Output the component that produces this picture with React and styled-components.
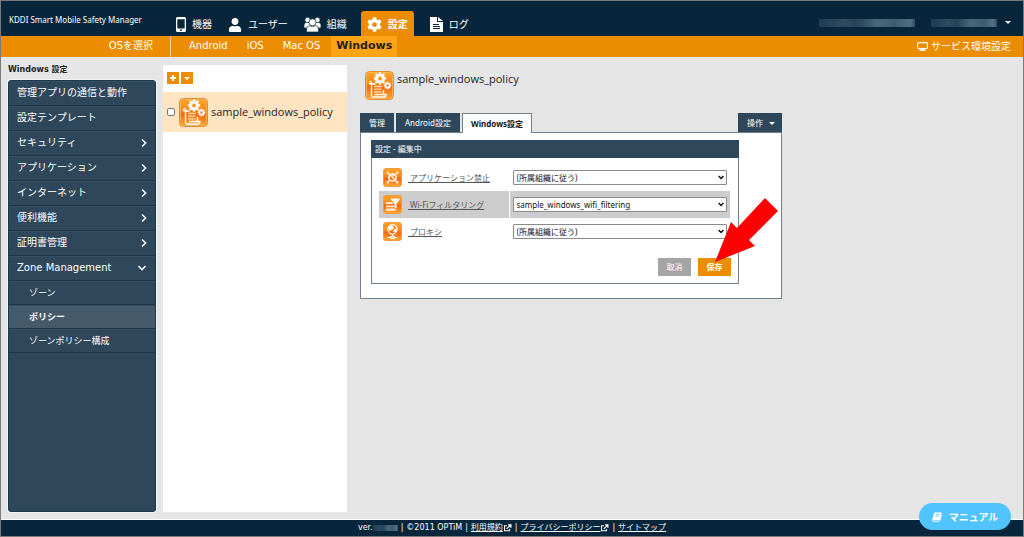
import React from "react";
import styled, { createGlobalStyle, css } from "styled-components";
import { FaUser, FaCog } from "react-icons/fa";

const wide = '"DejaVu Sans", "Noto Sans CJK JP", sans-serif';
const narrow = '"Noto Sans", "Noto Sans CJK JP", sans-serif';
const title = '"Open Sans", "Noto Sans CJK JP", sans-serif';

const GlobalStyle = createGlobalStyle`
  *, *::before, *::after { box-sizing: border-box; }
  body { margin: 0; background: #e5e5e5; color: #222; font: 10px/16px ${wide}; }
  button, select, input { font-family: inherit; margin: 0; }
  a { color: inherit; }
  svg { display: block; flex: none; }
`;

const Shell = styled.div`
  min-height: 100vh;
  display: flex;
  flex-direction: column;
  border: 1px solid #7b7b7b;
`;

const Header = styled.header`
  display: flex;
  height: 35px;
  padding-left: 8px;
  background: #07263b;
  color: #fff;
`;
const Brand = styled.div`
  width: 161px;
  padding-top: 11px;
  font: 8px/16px ${narrow};
  white-space: nowrap;
`;
const Nav = styled.nav`
  display: flex;
  align-items: flex-end;
`;
const NavLink = styled.a`
  display: flex;
  align-items: center;
  gap: 6px;
  height: 25px;
  padding: 2px 6px 0 6px;
  margin-right: 4px;
  border-radius: 3px 3px 0 0;
  text-decoration: none;
  white-space: nowrap;
  ${(p) => p.$active && css`
    margin: 0 10px 0 4px;
    background: #ec8c00;
    font-weight: bold;
  `}
`;
const Account = styled.button`
  display: flex;
  align-items: center;
  gap: 8px;
  margin-left: auto;
  padding: 8px 12px 0 0;
  border: 0;
  background: none;
  color: #fff;
`;
const AccountNames = styled.span`
  display: flex;
  gap: 16px;
`;
const Masked = styled.span`
  display: inline-block;
  width: ${(p) => p.$w}px;
  height: ${(p) => p.$h || 8}px;
  background: linear-gradient(90deg, #1f3d52, #2e4c60 25%, #264559 40%, #4a6679 60%, #3f5c70 80%, #557082 95%, #2d4a5e);
`;
const Caret = styled.span`
  border: 3px solid transparent;
  border-top-color: #fff;
  border-bottom: 0;
`;

const OsBar = styled.nav`
  display: flex;
  height: 21px;
  background: #ec8c00;
  color: #fff;
  line-height: 20px;
`;
const OsTitle = styled.div`
  width: 170px;
  padding-right: 17px;
  border-right: 1px solid #ffd9a0;
  text-align: right;
`;
const OsLinks = styled.div`
  display: flex;
  padding-left: 10px;
`;
const OsLink = styled.a`
  padding: 0 8px;
  margin-right: 3px;
  text-decoration: none;
  white-space: nowrap;
  ${(p) => p.$active && css`
    padding: 0 5px;
    background: #ffa414;
    color: #222;
    font-size: 11px;
    font-weight: bold;
  `}
`;
const ServiceLink = styled.a`
  display: flex;
  align-items: center;
  gap: 3px;
  margin-left: auto;
  padding-right: 12px;
  text-decoration: none;
`;

const Body = styled.div`
  flex: 1;
  display: grid;
  grid-template-columns: 148px 184px minmax(0, 1fr);
  padding: 8px 12px 7px 7px;
`;

const Sidebar = styled.aside`
  display: flex;
  flex-direction: column;
`;
const SideTitle = styled.h2`
  margin: 0;
  font-size: 8px;
  line-height: 10px;
  height: 15px;
`;
const Menu = styled.ul`
  flex: 1;
  margin: 0;
  padding: 0;
  list-style: none;
  border: 1px solid #1a3a50;
  border-radius: 3px;
  background: #2e475b;
  box-shadow: 0 0 0 1px #f4f4f4;
`;
const MenuLink = styled.a`
  display: flex;
  align-items: center;
  justify-content: space-between;
  height: ${(p) => (p.$sub ? 24 : 25)}px;
  padding: ${(p) => (p.$sub ? "0 8px 0 20px" : "0 8px")};
  border-bottom: 1px solid #1a3547;
  box-shadow: inset 0 1px #374f63;
  background: ${(p) => (p.$active ? "#455a6b" : "transparent")};
  color: #fff;
  font-size: ${(p) => (p.$sub ? 9 : 10)}px;
  font-weight: ${(p) => (p.$active ? "bold" : "normal")};
  text-decoration: none;
  white-space: nowrap;
`;

const ListPane = styled.section`
  margin-left: 7px;
  margin-right: -7px;
  background: #fff;
`;
const Tools = styled.div`
  display: flex;
  gap: 2px;
  height: 27px;
  padding: 7px 4px;
`;
const ToolButton = styled.button`
  display: grid;
  place-items: center;
  width: 12px;
  height: 12px;
  padding: 0;
  border: 0;
  background: #ec8c00;
`;
const ListItem = styled.label`
  display: flex;
  align-items: center;
  height: 40px;
  padding: 0 4px;
  background: #ffe4c2;
  font: 11px/16px ${title};
`;
const Check = styled.input`
  appearance: none;
  width: 8px;
  height: 8px;
  margin: 0 4px 0 0;
  border: 1px solid #777;
  border-radius: 2px;
  background: #fff;
`;
const ItemName = styled.span`
  padding-left: 3px;
`;

const Main = styled.main`
  padding: 6px 0 0 20px;
`;
const PolicyHead = styled.div`
  display: flex;
  height: 42px;
  padding-left: 5px;
`;
const PolicyName = styled.h1`
  margin: 0;
  padding-left: 3px;
  font: 11px/16px ${title};
`;
const Detail = styled.div`
  width: 100%;
  max-width: 422px;
`;
const TabRow = styled.div`
  display: flex;
  gap: 2px;
  height: 19px;
  font: 8px/18px ${narrow};
`;
const Tab = styled.button`
  height: ${(p) => (p.$active ? 20 : 19)}px;
  padding: 0 8px;
  border: 1px solid ${(p) => (p.$active ? "#71818f" : "#2e475b")};
  border-bottom: 0;
  background: ${(p) => (p.$active ? "#fff" : "#2e475b")};
  color: ${(p) => (p.$active ? "#111" : "#fff")};
  font: inherit;
  font-weight: ${(p) => (p.$active ? "bold" : "normal")};
  white-space: nowrap;
  z-index: 1;
`;
const Operate = styled(Tab)`
  display: flex;
  align-items: center;
  gap: 6px;
  margin-left: auto;
  padding: 0 6px 0 8px;
`;
const Panel = styled.div`
  padding: 7px 42px 14px 10px;
  border: 1px solid #71818f;
  background: #fff;
`;
const Box = styled.form`
  border: 1px solid #71818f;
  padding-bottom: 7px;
`;
const BoxTitle = styled.h3`
  margin: -1px -1px 6px;
  padding: 0 4px;
  background: #2e475b;
  color: #fff;
  font: 8px/18px ${narrow};
`;
const Settings = styled.table`
  width: calc(100% - 15px);
  margin: 0 8px 0 7px;
  border-collapse: collapse;
  font: 8px/16px ${narrow};
`;
const Row = styled.tr`
  height: 27px;
  background: ${(p) => (p.$shade ? "#cdcdcd" : "#fff")};
`;
const NameCell = styled.th`
  width: 130px;
  padding: 0 4px;
  border-right: 1px solid #fff;
  font-weight: normal;
  text-align: left;
`;
const NameInner = styled.div`
  display: flex;
  align-items: center;
  gap: 6px;
  color: #555;
`;
const NameLink = styled.a`
  white-space: pre;
  line-height: 12px;
`;
const FieldCell = styled.td`
  padding: 0 3px 0 3px;
`;
const SelectWrap = styled.div`
  display: grid;
  align-items: center;
  & > * { grid-area: 1 / 1; }
  & > svg { justify-self: end; margin-right: 3px; pointer-events: none; }
`;
const Select = styled.select`
  appearance: none;
  width: 100%;
  height: 15px;
  padding: 0 3px;
  border: 1px solid #8a8a8a;
  border-radius: 1px;
  background: #fff;
  color: #111;
  font-size: 8px;
  line-height: 12px;
`;
const Actions = styled.div`
  display: flex;
  justify-content: flex-end;
  gap: 7px;
  padding: 13px 7px 0 0;
`;
const ActionButton = styled.button`
  width: 33px;
  height: 18px;
  padding: 0;
  border: 0;
  background: ${(p) => (p.$primary ? "#ec8c00" : "#a5a5a5")};
  color: #fff;
  font: ${(p) => (p.$primary ? "bold" : "normal")} 8px/18px ${narrow};
`;
const SaveSpot = styled.div`
  position: relative;
  & > svg {
    position: absolute;
    left: 17px;
    top: -60px;
    pointer-events: none;
  }
`;

const Footer = styled.footer`
  display: flex;
  align-items: center;
  justify-content: center;
  gap: 3px;
  height: 17px;
  border-top: 1px solid #fff;
  background: #07263b;
  color: #fff;
  font-size: 8px;
  white-space: nowrap;
`;
const Version = styled.span`
  display: flex;
  align-items: center;
`;
const FootLink = styled.a`
  display: flex;
  align-items: center;
  text-underline-offset: 1px;
`;
const Manual = styled.button`
  position: fixed;
  right: 13px;
  bottom: 7px;
  display: flex;
  align-items: center;
  justify-content: center;
  gap: 7px;
  width: 92px;
  height: 27px;
  padding: 0;
  border: 0;
  border-radius: 14px;
  background: #51c3fd;
  color: #fff;
  font: bold 10px/16px ${narrow};
`;

const PhoneIcon = () => (
  <svg width="10" height="15" viewBox="0 0 10 15">
    <path fill="#fff" fillRule="evenodd" d="M1.500 0h7Q10 0 10 1.500v12Q10 15 8.500 15h-7Q0 15 0 13.500v-12Q0 0 1.500 0zM1.300 2.200v9.300h7.400V2.200zM4 12.600v1.200h2v-1.200z" />
  </svg>
);
const GroupIcon = () => (
  <svg width="17" height="15" viewBox="0 0 17 15">
    <g fill="#fff" stroke="#07263b" strokeWidth=".7">
      <circle cx="3.600" cy="3" r="2.700" />
      <circle cx="13.400" cy="3" r="2.700" />
      <path d="M0 11V8q0-2.500 2.500-2.500h12Q17 5.500 17 8v3z" />
      <circle cx="8.500" cy="5.300" r="3.500" />
      <path d="M2.500 15v-3q0-3 3-3.300Q8.500 10.500 11.500 8.700q3 .3 3 3.300v3z" />
    </g>
  </svg>
);
const DocIcon = () => (
  <svg width="13" height="15" viewBox="0 0 13 15">
    <path fill="#fff" d="M0 0h7v5h6v10H0z M8 0l5 4H8z" />
    <path stroke="#07263b" d="M3 7.500h6M3 9.500h7M3 11.500h7" />
  </svg>
);
const MonitorIcon = () => (
  <svg width="11" height="9" viewBox="0 0 11 9">
    <rect x=".6" y=".6" width="9.800" height="6" rx="1" fill="none" stroke="#fff" strokeWidth="1.200" />
    <path fill="#fff" d="M4 6.500h3v1.300h1.500V9h-6V7.800H4z" />
  </svg>
);
const Chevron = ({ down }) => (
  <svg width={down ? 10 : 6} height={down ? 6 : 10} viewBox={down ? "0 0 10 6" : "0 0 6 10"}>
    <path d={down ? "M1.500 1l3.500 3.700L8.500 1" : "M1 1.500L4.700 5 1 8.500"} fill="none" stroke="#fff" strokeWidth="1.500" />
  </svg>
);
const SelectArrow = () => (
  <svg width="6" height="5" viewBox="0 0 6 5">
    <path d="M.6 1L3 3.500 5.400 1" fill="none" stroke="#111" strokeWidth="1.500" />
  </svg>
);
const ExternalIcon = () => (
  <svg width="9" height="8" viewBox="0 0 9 8">
    <path d="M4 1.700H1.500v5h5V5" fill="none" stroke="#fff" strokeWidth="1.100" />
    <path d="M3.700 4.900L7.400 1.400M5 .9h2.900v2.800" fill="none" stroke="#fff" strokeWidth="1.200" />
  </svg>
);
const BookIcon = () => (
  <svg width="10" height="10" viewBox="0 0 10 10">
    <path fill="#fff" d="M3.200.5H9q1 0 .7.900L8 7.200q-.3.800-1.100.8H1.800q-.6.500 0 .8h5.400L9.300 3l.5.200L8 9q-.2.700-1 .7H1.600Q-.2 9.500.3 7.600L2 1.500Q2.300.5 3.200.5z" />
    <path stroke="#51c3fd" strokeWidth=".7" d="M3.800 2.500h4M3.300 4.200h4" />
  </svg>
);

const Gradient = ({ id }) => (
  <linearGradient id={id} x1="0" y1="0" x2="0" y2="1">
    <stop offset="0" stopColor="#ffa52a" />
    <stop offset=".45" stopColor="#fd8614" />
    <stop offset=".55" stopColor="#f8660a" />
    <stop offset="1" stopColor="#ffaa35" />
  </linearGradient>
);

const Gear = ({ x, y, r, teeth }) => (
  <g transform={`translate(${x} ${y})`}>
    <circle r={r * 0.56} fill="none" stroke="#fff" strokeWidth={r * 0.5} />
    {Array.from({ length: teeth }, (_, i) => (
      <rect key={i} x={-r * 0.17} y={-r} width={r * 0.34} height={r * 0.4} fill="#fff" transform={`rotate(${(360 / teeth) * i})`} />
    ))}
  </g>
);

const PolicyIcon = ({ id }) => (
  <svg width="29" height="29" viewBox="0 0 29 29">
    <defs><Gradient id={id} /></defs>
    <rect x=".5" y=".5" width="28" height="28" rx="4" fill={`url(#${id})`} stroke="#e08a35" />
    <rect x="1.500" y="1.500" width="26" height="26" rx="3" fill="none" stroke="#ffc06a" strokeOpacity=".7" />
    <path d="M4 12.500h3.500M6.500 12v13.500M6.500 13h4M18.500 19v4.500M7 26h11.500q2.500 0 2.500-2.500h-11" fill="none" stroke="#fff" strokeWidth="1.400" />
    <path d="M9 15.500h8M9 18.200h7.500M9 20.900h7.500" stroke="#ffdcb4" strokeWidth="1.300" />
    <Gear x={15} y={7.500} r={6.200} teeth={8} />
    <Gear x={22.500} y={14.500} r={3.800} teeth={8} />
    <Gear x={5.500} y={11.500} r={1.800} teeth={6} />
  </svg>
);

const glyphs = {
  ban: (
    <g fill="none" stroke="#fff">
      <circle cx="9.500" cy="9.500" r="3.600" strokeWidth="1.500" />
      <path d="M4 4l11 11M15 4l-2.500 2.500M4 15l2.500-2.500M8 8.500l3-1" strokeWidth="1.300" />
      <path d="M3.500 5.500l2-2M13.500 3.500l2 2M3.500 13.500l2 2M13.500 15.500l2-2" />
    </g>
  ),
  filter: (
    <g fill="#fff">
      <path d="M8 3.500h8.500v1.300L13.500 8.500V14l-2-1.500v-4L8 4.800z" />
      <path d="M3 7h6l1.500 2H3zM3 10.500h8v1.700H3zM3 13.500h8.500l1.500 1.500v.8H3z" fillOpacity=".85" />
    </g>
  ),
  globe: (
    <g fill="none" stroke="#fff">
      <circle cx="9.500" cy="7.300" r="4.700" strokeWidth="1.200" />
      <path d="M6 5q3-2 4 0t-2 2.500T6.500 9zM11 8l2-1v2l-2 1z" fill="#fff" />
      <path d="M9.500 12v3.500M4.500 15.500h3.500M11 15.500h3.500M8 14.500h3v2H8z" strokeWidth="1.200" />
    </g>
  ),
};
const SettingIcon = ({ kind }) => (
  <svg width="19" height="19" viewBox="0 0 19 19">
    <defs><Gradient id={`tile-${kind}`} /></defs>
    <rect x=".5" y=".5" width="18" height="18" rx="2.500" fill={`url(#tile-${kind})`} stroke="#f29a45" />
    {glyphs[kind]}
  </svg>
);

const menu = [
  { text: "管理アプリの通信と動作" },
  { text: "設定テンプレート" },
  { text: "セキュリティ", more: true },
  { text: "アプリケーション", more: true },
  { text: "インターネット", more: true },
  { text: "便利機能", more: true },
  { text: "証明書管理", more: true },
  { text: "Zone Management", open: true },
  { text: "ゾーン", sub: true },
  { text: "ポリシー", sub: true, active: true },
  { text: "ゾーンポリシー構成", sub: true },
];

const settings = [
  { kind: "ban", name: "アプリケーション禁止", value: "(所属組織に従う)" },
  { kind: "filter", name: "Wi-Fiフィルタリング", value: "sample_windows_wifi_filtering", shade: true },
  { kind: "globe", name: "プロキシ", value: "(所属組織に従う)" },
];

export default function App() {
  return (
    <Shell>
      <GlobalStyle />
      <Header>
        <Brand>KDDI Smart Mobile Safety Manager</Brand>
        <Nav>
          <NavLink href="#devices"><PhoneIcon />機器</NavLink>
          <NavLink href="#users"><FaUser size={14} />ユーザー</NavLink>
          <NavLink href="#groups"><GroupIcon />組織</NavLink>
          <NavLink href="#settings" $active><FaCog size={15} />設定</NavLink>
          <NavLink href="#logs"><DocIcon />ログ</NavLink>
        </Nav>
        <Account type="button" aria-label="アカウント">
          <AccountNames>
            <Masked $w={96} />
            <Masked $w={66} />
          </AccountNames>
          <Caret />
        </Account>
      </Header>
      <OsBar>
        <OsTitle>OSを選択</OsTitle>
        <OsLinks>
          <OsLink href="#android">Android</OsLink>
          <OsLink href="#ios">iOS</OsLink>
          <OsLink href="#macos">Mac OS</OsLink>
          <OsLink href="#windows" $active>Windows</OsLink>
        </OsLinks>
        <ServiceLink href="#service"><MonitorIcon />サービス環境設定</ServiceLink>
      </OsBar>
      <Body>
        <Sidebar>
          <SideTitle>Windows 設定</SideTitle>
          <Menu>
            {menu.map((m) => (
              <li key={m.text}>
                <MenuLink href="#menu" $sub={m.sub} $active={m.active}>
                  {m.text}
                  {m.more && <Chevron />}
                  {m.open && <Chevron down />}
                </MenuLink>
              </li>
            ))}
          </Menu>
        </Sidebar>
        <ListPane>
          <Tools>
            <ToolButton type="button" aria-label="追加">
              <svg width="6" height="6" viewBox="0 0 6 6"><path d="M3 0v6M0 3h6" stroke="#fff" strokeWidth="2" /></svg>
            </ToolButton>
            <ToolButton type="button" aria-label="メニュー"><Caret /></ToolButton>
          </Tools>
          <ListItem>
            <Check type="checkbox" />
            <PolicyIcon id="tile-list" />
            <ItemName>sample_windows_policy</ItemName>
          </ListItem>
        </ListPane>
        <Main>
          <PolicyHead>
            <PolicyIcon id="tile-head" />
            <PolicyName>sample_windows_policy</PolicyName>
          </PolicyHead>
          <Detail>
            <TabRow>
              <Tab type="button">管理</Tab>
              <Tab type="button">Android設定</Tab>
              <Tab type="button" $active>Windows設定</Tab>
              <Operate type="button">操作<Caret /></Operate>
            </TabRow>
            <Panel>
              <Box onSubmit={(e) => e.preventDefault()}>
                <BoxTitle>設定 - 編集中</BoxTitle>
                <Settings>
                  <tbody>
                    {settings.map((s) => (
                      <Row key={s.kind} $shade={s.shade}>
                        <NameCell scope="row">
                          <NameInner>
                            <SettingIcon kind={s.kind} />
                            <NameLink href="#setting" id={`name-${s.kind}`}>{" " + s.name}</NameLink>
                          </NameInner>
                        </NameCell>
                        <FieldCell>
                          <SelectWrap>
                            <Select aria-labelledby={`name-${s.kind}`}>
                              <option>{s.value}</option>
                            </Select>
                            <SelectArrow />
                          </SelectWrap>
                        </FieldCell>
                      </Row>
                    ))}
                  </tbody>
                </Settings>
                <Actions>
                  <ActionButton type="button">取消</ActionButton>
                  <SaveSpot>
                    <ActionButton type="submit" $primary>保存</ActionButton>
                    <svg width="63" height="64" viewBox="0 0 63 64">
                      <path fill="#f00" d="M0 64L16 24l6 6L50 0l13 13-29 29 6 6z" />
                    </svg>
                  </SaveSpot>
                </Actions>
              </Box>
            </Panel>
          </Detail>
        </Main>
      </Body>
      <Footer>
        <Version>ver.<Masked $w={25} $h={6} /></Version>
        <span>|</span>
        <span>©2011 OPTiM</span>
        <span>|</span>
        <FootLink href="#terms">利用規約<ExternalIcon /></FootLink>
        <span>|</span>
        <FootLink href="#privacy">プライバシーポリシー<ExternalIcon /></FootLink>
        <span>|</span>
        <FootLink href="#sitemap">サイトマップ</FootLink>
      </Footer>
      <Manual type="button"><BookIcon />マニュアル</Manual>
    </Shell>
  );
}
